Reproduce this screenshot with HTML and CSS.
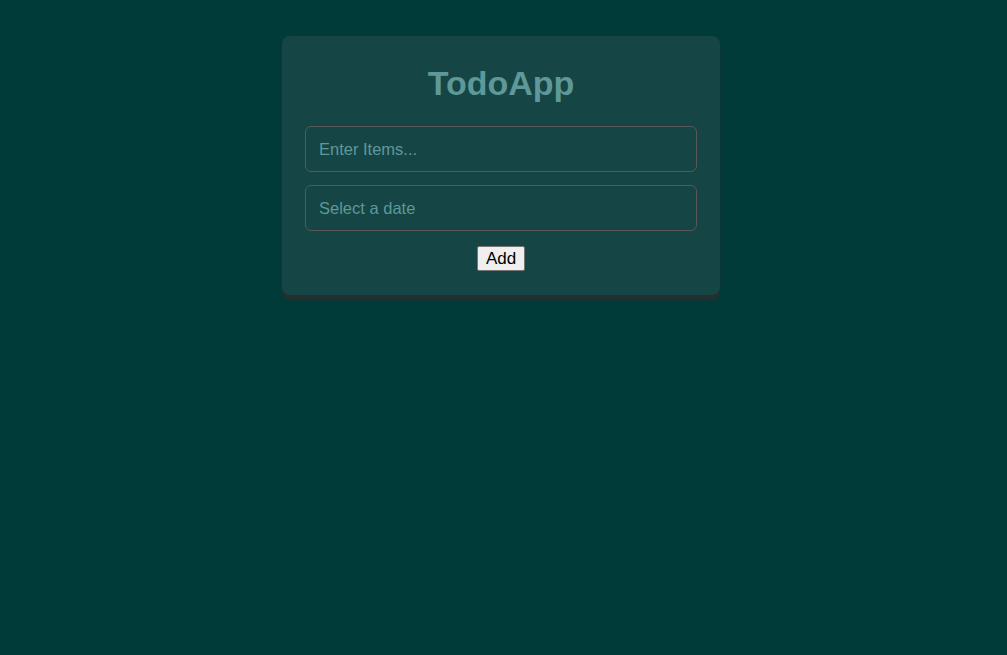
FILE: index.html
```html
<!DOCTYPE html>
<html lang="en">
<head>
<meta charset="utf-8">
<title>TodoApp</title>
<link rel="stylesheet" href="styles.css">
</head>
<body>
<div class="page">
  <div class="card">
    <h1 class="title">TodoApp</h1>
    <input class="field" type="text" placeholder="Enter Items...">
    <input class="field" type="text" placeholder="Select a date">
    <div class="actions"><button class="add" type="button">Add</button></div>
  </div>
</div>
</body>
</html>
```
FILE: styles.css
```css
html, body {
  margin: 0;
  padding: 0;
  background: #003b3a;
  height: 100%;
}
.page {
  display: flex;
  justify-content: center;
  padding: 36px 5px 0 0;
  font-family: "Liberation Sans", Arial, sans-serif;
}
.card {
  width: 392px;
  padding: 18px 23px 24px;
  background: #164545;
  border-radius: 8px;
  box-shadow: 0 5px 2px rgba(45, 45, 45, 0.85);
  display: flex;
  flex-direction: column;
  gap: 13px;
}
.title {
  margin: 0;
  text-align: center;
  font-size: 34px;
  font-weight: bold;
  color: #5e9898;
  line-height: 58px;
  height: 59px;
}
.field {
  box-sizing: border-box;
  width: 392px;
  height: 46px;
  padding: 0 13px;
  background: transparent;
  border: 1px solid #585858;
  border-radius: 6px;
  font-family: "Liberation Sans", Arial, sans-serif;
  font-size: 16.5px;
  color: #5e9898;
  outline: none;
}
.field::placeholder {
  color: #5e9898;
}
.actions {
  display: flex;
  justify-content: center;
  padding-top: 2px;
}
.add {
  font-family: "Liberation Sans", Arial, sans-serif;
  font-size: 17px;
  line-height: 19px;
  padding: 2px 8px;
  background: #efefef;
  border: 1px solid #767676;
  border-radius: 2px;
  color: #000;
}
```
